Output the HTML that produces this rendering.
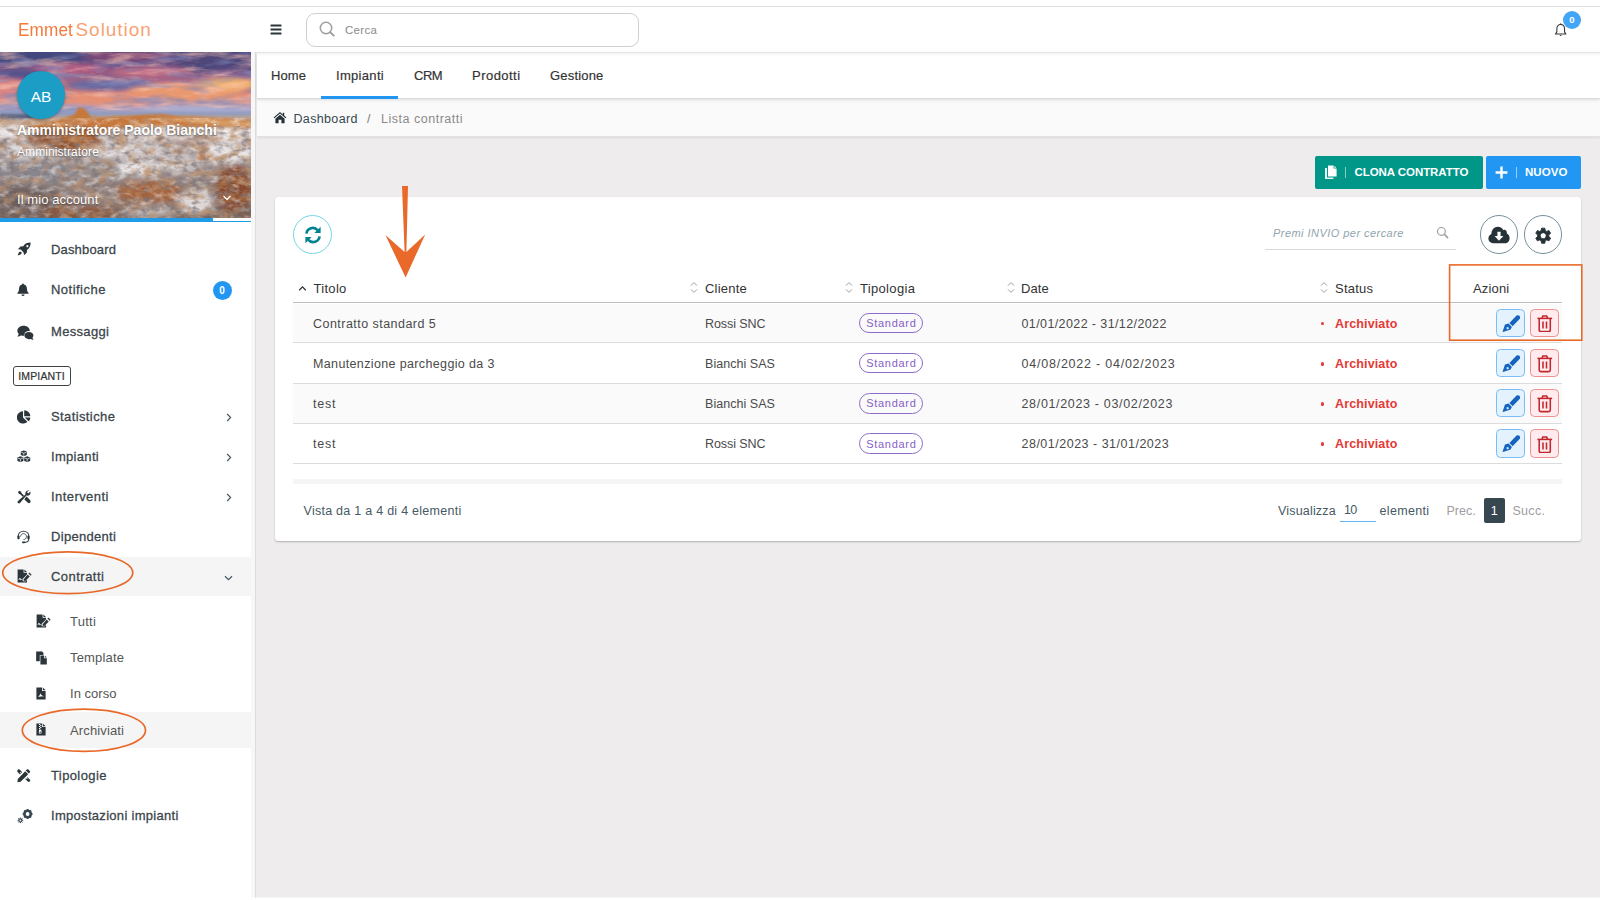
<!DOCTYPE html>
<html lang="it">
<head>
<meta charset="utf-8">
<title>Lista contratti</title>
<style>
*{box-sizing:border-box;margin:0;padding:0}
html,body{width:1600px;height:900px;overflow:hidden}
body{position:relative;background:#eeecec;font-family:"Liberation Sans",sans-serif;font-size:13px;color:#37474f}
.abs{position:absolute}
.t{position:absolute;white-space:nowrap;line-height:1}
/* top strip */
#topstrip{left:0;top:0;width:1600px;height:7px;background:#fff;border-bottom:1px solid #e2e2e2}
/* header */
#header{left:0;top:7px;width:1600px;height:45px;background:#fff}
#hshadow{left:256px;top:52px;width:1344px;height:1px;background:#e4e4e4;box-shadow:0 1px 3px rgba(0,0,0,.13)}
/* sidebar */
#sidebar{left:0;top:52px;width:256px;height:848px;background:#fff;border-right:1px solid #dcdcdc}
#sbtrack{left:251px;top:52px;width:4px;height:848px;background:#f7f7f7}
/* nav */
#nav{left:257px;top:53px;width:1343px;height:46px;background:#fff;border-bottom:1px solid #dcdcdc;box-shadow:0 1px 3px rgba(0,0,0,.12)}
#crumb{left:257px;top:99px;width:1343px;height:38px;background:#fafafa;border-bottom:1px solid #e2e2e2;box-shadow:0 1px 2px rgba(0,0,0,.07)}
/* card */
#card{left:275px;top:197px;width:1306px;height:344px;background:#fff;border-radius:3px;box-shadow:0 1px 2px rgba(0,0,0,.26)}
.mi{font-size:13px;color:#3a4449;-webkit-text-stroke:.27px #3a4449;letter-spacing:.35px}
.si{font-size:13px;color:#555;letter-spacing:.3px}
.nt{font-size:13px;color:#333;-webkit-text-stroke:.18px #333;letter-spacing:.3px}
.th{font-size:13px;color:#333;letter-spacing:.3px}
.td{font-size:12.5px;color:#4a4a4a;letter-spacing:.3px}
.ft{font-size:12.5px;color:#455a64;letter-spacing:.25px}
/*LS*/
#cerca{letter-spacing:0.303px !important}
#uname{letter-spacing:-0.005px !important}
#urole{letter-spacing:0.086px !important}
#uacc{letter-spacing:0.084px !important}
#m0{letter-spacing:0.161px !important}
#m1{letter-spacing:0.478px !important}
#m2{letter-spacing:0.323px !important}
#m3{letter-spacing:0.392px !important}
#m4{letter-spacing:0.310px !important}
#m5{letter-spacing:0.435px !important}
#m6{letter-spacing:0.305px !important}
#m7{letter-spacing:0.470px !important}
#m8{letter-spacing:0.390px !important}
#m9{letter-spacing:0.300px !important}
#s0{letter-spacing:0.272px !important}
#s1{letter-spacing:0.164px !important}
#s2{letter-spacing:0.021px !important}
#s3{letter-spacing:0.128px !important}
#n0{letter-spacing:0.104px !important}
#n1{letter-spacing:0.310px !important}
#n2{letter-spacing:-0.455px !important}
#n3{letter-spacing:0.470px !important}
#n4{letter-spacing:0.179px !important}
#bc1{letter-spacing:0.343px !important}
#bc3{letter-spacing:0.518px !important}
#clona{letter-spacing:-0.063px !important}
#nuovo{letter-spacing:0.057px !important}
#premi{letter-spacing:0.454px !important}
#h0{letter-spacing:0.297px !important}
#h1{letter-spacing:0.205px !important}
#h2{letter-spacing:0.327px !important}
#h3{letter-spacing:0.110px !important}
#h4{letter-spacing:0.208px !important}
#h5{letter-spacing:0.156px !important}
#r0a{letter-spacing:0.465px !important}
#r1a{letter-spacing:0.361px !important}
#r2a{letter-spacing:0.781px !important}
#r3a{letter-spacing:0.781px !important}
#r0b{letter-spacing:-0.078px !important}
#r1b{letter-spacing:0.042px !important}
#r2b{letter-spacing:0.042px !important}
#r3b{letter-spacing:-0.078px !important}
#r0c{letter-spacing:0.394px !important}
#r1c{letter-spacing:0.771px !important}
#r2c{letter-spacing:0.667px !important}
#r3c{letter-spacing:0.498px !important}
#r0d{letter-spacing:0.140px !important}
#r1d{letter-spacing:0.140px !important}
#r2d{letter-spacing:0.140px !important}
#r3d{letter-spacing:0.140px !important}
#f0{letter-spacing:0.264px !important}
#f1{letter-spacing:0.176px !important}
#f2{letter-spacing:-0.756px !important}
#f3{letter-spacing:0.343px !important}
#f4{letter-spacing:-0.009px !important}
#f6{letter-spacing:0.284px !important}
/*ENDLS*/
</style>
</head>
<body>
<div id="topstrip" class="abs"></div>
<div id="header" class="abs"></div>
<div id="sidebar" class="abs"></div>
<div id="sbtrack" class="abs"></div>
<div id="crumb" class="abs"></div>
<div id="nav" class="abs"></div>
<div id="hshadow" class="abs"></div>
<div id="card" class="abs"></div>

<!-- HEADER -->
<div class="t" id="logo" style="left:17.5px;top:20px;font-size:19px;color:#f4793b"><span style="display:inline-block;transform:scaleX(.9);transform-origin:0 50%;letter-spacing:.2px">Emmet</span><span style="display:inline-block;color:#f8a273;margin-left:-3.2px;letter-spacing:.95px;transform-origin:0 50%">Solution</span></div>
<svg class="abs" style="left:270px;top:24px" width="12" height="11" viewBox="0 0 12 11"><g fill="#2b353a"><rect x="0.5" y="0.6" width="11" height="2" rx=".5"/><rect x="0.5" y="4.5" width="11" height="2" rx=".5"/><rect x="0.5" y="8.4" width="11" height="2" rx=".5"/></g></svg>
<div class="abs" id="search" style="left:306px;top:13px;width:333px;height:34px;border:1px solid #cfcfcf;border-radius:9px;background:#fff"></div>
<svg class="abs" style="left:318px;top:20px" width="18" height="18" viewBox="0 0 18 18"><circle cx="8" cy="8" r="5.7" fill="none" stroke="#9e9e9e" stroke-width="1.5"/><path d="M12.2 12.2 L15.8 15.6" stroke="#9e9e9e" stroke-width="1.9" stroke-linecap="round"/></svg>
<div class="t" id="cerca" style="left:345px;top:25px;font-size:11.5px;color:#8a8a8a">Cerca</div>
<svg class="abs" style="left:1553.2px;top:22.8px" width="15.4" height="15.4" viewBox="0 0 16 16"><path d="M8 1.6 C5.3 1.6 4 3.6 4 6.2 V9.2 L2.6 11.4 H13.4 L12 9.2 V6.2 C12 3.6 10.7 1.6 8 1.6 Z" fill="none" stroke="#333" stroke-width="1.1" stroke-linejoin="round"/><path d="M6.8 12.6 Q8 14.4 9.2 12.6 Z" fill="#333"/><rect x="7.4" y="0.4" width="1.2" height="1.4" fill="#333"/></svg>
<div class="abs" style="left:1563px;top:10.6px;width:18px;height:18px;border-radius:9px;background:#42a5f5"></div>
<div class="t" id="bell0" style="left:1563px;top:15.4px;width:18px;text-align:center;font-size:9.5px;font-weight:700;color:#fff">0</div>

<!-- USER PANEL -->
<svg class="abs" id="photo" style="left:0;top:52px" width="251" height="166" viewBox="0 0 251 166" preserveAspectRatio="none">
<defs>
<linearGradient id="sky" x1="0" y1="0" x2="0" y2="1">
<stop offset="0" stop-color="#46457a"/><stop offset=".22" stop-color="#6b5086"/><stop offset=".46" stop-color="#a96684"/><stop offset=".7" stop-color="#de8c78"/><stop offset=".88" stop-color="#bea6bf"/><stop offset="1" stop-color="#8e9bc4"/>
</linearGradient>
<linearGradient id="gnd" x1="0" y1="0" x2="0" y2="1">
<stop offset="0" stop-color="#c2a48e"/><stop offset=".3" stop-color="#b3a5a3"/><stop offset=".65" stop-color="#938583"/><stop offset="1" stop-color="#735e56"/>
</linearGradient>
<filter id="b3" x="-30%" y="-30%" width="160%" height="160%"><feGaussianBlur stdDeviation="3"/></filter>
<filter id="b4" x="-30%" y="-30%" width="160%" height="160%"><feGaussianBlur stdDeviation="4 2.2"/></filter>
<filter id="b1" x="-30%" y="-30%" width="160%" height="160%"><feGaussianBlur stdDeviation="1"/></filter>
<filter id="tex" x="0" y="0" width="100%" height="100%">
<feTurbulence type="fractalNoise" baseFrequency="0.1 0.17" numOctaves="4" seed="7" result="n"/>
<feColorMatrix in="n" type="matrix" values="0 0 0 0 1  0 0 0 0 1  0 0 0 0 1  2.6 0 0 0 -1.15"/>
</filter>
<filter id="tex2" x="0" y="0" width="100%" height="100%">
<feTurbulence type="fractalNoise" baseFrequency="0.07 0.12" numOctaves="4" seed="23" result="n"/>
<feColorMatrix in="n" type="matrix" values="0 0 0 0 .5  0 0 0 0 .27  0 0 0 0 .14  0 3 0 0 -1.4"/>
</filter>
<filter id="tex3" x="0" y="0" width="100%" height="100%">
<feTurbulence type="fractalNoise" baseFrequency="0.12 0.2" numOctaves="3" seed="5" result="n"/>
<feColorMatrix in="n" type="matrix" values="0 0 0 0 .2  0 0 0 0 .17  0 0 0 0 .18  0 0 3 0 -1.45"/>
</filter>
<filter id="texsky" x="0" y="0" width="100%" height="100%">
<feTurbulence type="fractalNoise" baseFrequency="0.03 0.13" numOctaves="4" seed="11" result="n"/>
<feColorMatrix in="n" type="matrix" values="0 0 0 0 .96  0 0 0 0 .55  0 0 0 0 .45  3 0 0 0 -1.35"/>
</filter>
<filter id="texsky2" x="0" y="0" width="100%" height="100%">
<feTurbulence type="fractalNoise" baseFrequency="0.028 0.11" numOctaves="3" seed="31" result="n"/>
<feColorMatrix in="n" type="matrix" values="0 0 0 0 .22  0 0 0 0 .24  0 0 0 0 .48  0 3 0 0 -1.4"/>
</filter>
</defs>
<rect width="251" height="64" fill="url(#sky)"/>
<g filter="url(#b4)">
<ellipse cx="35" cy="5" rx="50" ry="8" fill="#43467d"/>
<ellipse cx="128" cy="4" rx="45" ry="6" fill="#7e4a78"/>
<ellipse cx="218" cy="12" rx="42" ry="10" fill="#4f477a"/>
<ellipse cx="70" cy="17" rx="38" ry="5" fill="#b85c80"/>
<ellipse cx="150" cy="20" rx="40" ry="5" fill="#c06a84"/>
<ellipse cx="6" cy="38" rx="26" ry="11" fill="#de8580"/>
<ellipse cx="112" cy="33" rx="46" ry="6" fill="#6a679f"/>
<ellipse cx="20" cy="22" rx="24" ry="5" fill="#55528c"/>
<ellipse cx="185" cy="40" rx="58" ry="9" fill="#e8996f"/>
<ellipse cx="228" cy="32" rx="30" ry="6" fill="#f2b36e"/>
<ellipse cx="232" cy="22" rx="24" ry="4" fill="#7a5c90"/>
<ellipse cx="105" cy="47" rx="62" ry="6" fill="#e58f74"/>
<ellipse cx="40" cy="57" rx="55" ry="4.5" fill="#9097c2"/>
<ellipse cx="200" cy="58" rx="62" ry="4" fill="#a7acd0"/>
</g>
<rect width="251" height="58" filter="url(#texsky)" opacity=".6"/>
<rect width="251" height="58" filter="url(#texsky2)" opacity=".7"/>
<rect y="62" width="251" height="104" fill="url(#gnd)"/>
<rect y="59.5" width="251" height="5" fill="#8f9cc0" opacity=".8" filter="url(#b1)"/>
<rect y="62" width="34" height="5" fill="#5d6888" filter="url(#b1)"/>
<g filter="url(#b1)">
<path d="M14 78 L40 72 L58 68 L74 63 L79 55 L85 57 L92 66 L112 65 L140 63 L162 62 L176 64 L200 65 L236 67 L251 69 L251 77 L205 75 L150 74 L112 77 L92 84 L58 82 Z" fill="#c6773a"/>
<path d="M150 66 L200 66 L251 70 L251 74 L200 72 Z" fill="#d89a5e"/>
<path d="M26 84 L44 74 L60 80 L78 72 L96 84 L108 96 L84 100 L56 96 L34 98 Z" fill="#8f5330"/>
<path d="M62 80 L75 71 L88 75 L95 87 L80 92 L64 88 Z" fill="#b2632e"/>
<path d="M197 108 L201 96 L207 91 L213 97 L217 108 Z" fill="#c66f2e"/>
</g>
<g filter="url(#b3)">
<ellipse cx="12" cy="80" rx="20" ry="6" fill="#efedf0"/>
<ellipse cx="232" cy="82" rx="24" ry="6" fill="#f1eeee"/>
<ellipse cx="160" cy="82" rx="40" ry="5" fill="#e6e0e0"/>
<ellipse cx="198" cy="89" rx="28" ry="3.5" fill="#b4958a"/>
<ellipse cx="30" cy="100" rx="26" ry="7" fill="#e4e1e4"/>
<ellipse cx="125" cy="98" rx="40" ry="8" fill="#d6d0d2"/>
<ellipse cx="228" cy="100" rx="26" ry="10" fill="#e2dedf"/>
<ellipse cx="36" cy="120" rx="42" ry="12" fill="#8a868e"/>
<ellipse cx="100" cy="118" rx="26" ry="10" fill="#9a8f8c"/>
<ellipse cx="138" cy="116" rx="22" ry="7" fill="#e9e6e8"/>
<ellipse cx="180" cy="112" rx="22" ry="8" fill="#c9c3c4"/>
<ellipse cx="26" cy="148" rx="36" ry="14" fill="#6f605d"/>
<ellipse cx="95" cy="146" rx="28" ry="9" fill="#97857f"/>
<ellipse cx="150" cy="140" rx="34" ry="11" fill="#a4623b"/>
<ellipse cx="234" cy="136" rx="18" ry="24" fill="#87492a"/>
<ellipse cx="196" cy="150" rx="18" ry="12" fill="#dcd6d6"/>
<ellipse cx="80" cy="160" rx="40" ry="7" fill="#8a583e"/>
<ellipse cx="150" cy="160" rx="28" ry="6" fill="#b9aeac"/>
</g>
<rect y="66" width="251" height="100" filter="url(#tex)" opacity=".52"/>
<rect y="63" width="251" height="103" filter="url(#tex2)" opacity=".8"/>
<rect y="74" width="251" height="92" filter="url(#tex3)" opacity=".7"/>
</svg>
<div class="abs" style="left:0;top:218px;width:251px;height:4px;background:#fff"></div>
<div class="abs" style="left:0;top:218px;width:213px;height:3px;background:#1e9be9"></div>
<div class="abs" style="left:0;top:221px;width:251px;height:1px;background:#1e9be9"></div>
<div class="abs" style="left:17px;top:71px;width:48px;height:48px;border-radius:24px;background:#1b9dc6;box-shadow:0 1px 3px rgba(0,0,0,.35)"></div>
<div class="t" id="ab" style="left:17px;top:88.5px;width:48px;text-align:center;font-size:15.5px;color:#fff">AB</div>
<div class="t" id="uname" style="left:17px;top:123px;font-size:14px;font-weight:700;color:#fff;text-shadow:0 1px 2px rgba(0,0,0,.45)">Amministratore Paolo Bianchi</div>
<div class="t" id="urole" style="left:17px;top:146px;font-size:12px;color:#fff;text-shadow:0 1px 2px rgba(0,0,0,.5)">Amministratore</div>
<div class="t" id="uacc" style="left:17px;top:193px;font-size:13px;color:#fff;text-shadow:0 1px 2px rgba(0,0,0,.5)">Il mio account</div>
<svg class="abs" style="left:222px;top:194px" width="10" height="8" viewBox="0 0 10 8"><path d="M1.5 2 L5 5.5 L8.5 2" fill="none" stroke="#fff" stroke-width="1.3"/></svg>

<!-- SIDEBAR MENU -->
<div class="abs" style="left:0;top:557px;width:251px;height:39px;background:#f5f5f5"></div>
<div class="abs" style="left:0;top:712px;width:251px;height:36px;background:#f5f5f5"></div>
<svg class="abs" style="left:17px;top:242px" width="17" height="15" viewBox="0 0 17 15" fill="#2b353a"><path d="M13.6 .6 C10.6 .5 8 1.6 6.2 4.2 L3.4 4.4 L1 7.2 L3.8 7.6 L6.6 10.4 L7 13.2 L9.8 10.8 L10 8 C12.6 6.2 13.7 3.6 13.6 .6 Z M10.4 3 A1.1 1.1 0 1 1 10.39 3 Z" fill-rule="evenodd"/><path d="M3.4 9.4 C2 9.8 1.2 11.2 .8 13.4 C3 13 4.4 12.2 4.8 10.8 Z"/></svg>
<div class="t mi" id="m0" style="left:51px;top:243.00px">Dashboard</div>
<svg class="abs" style="left:17px;top:283px" width="17" height="15" viewBox="0 0 17 15" fill="#2b353a"><path d="M6 .6 C6.6 .6 6.9 1 6.9 1.5 C9 2 10 3.8 10 6 C10 8.4 10.8 9.2 11.6 10 V10.8 H.4 V10 C1.2 9.2 2 8.4 2 6 C2 3.8 3 2 5.1 1.5 C5.1 1 5.4 .6 6 .6 Z"/><path d="M4.5 11.5 H7.5 A1.5 1.5 0 0 1 4.5 11.5 Z"/></svg>
<div class="t mi" id="m1" style="left:51px;top:282.60px">Notifiche</div>
<svg class="abs" style="left:17px;top:325px" width="17" height="15" viewBox="0 0 17 15" fill="#2b353a"><path d="M6.6 .8 C3 .8 .4 3 .4 5.8 C.4 7 .9 8.1 1.8 9 C1.5 10 .9 10.8 .4 11.4 C1.8 11.4 3.2 10.9 4 10.4 C4.8 10.7 5.7 10.8 6.6 10.8 C10.2 10.8 12.8 8.6 12.8 5.8 C12.8 3 10.2 .8 6.6 .8 Z"/><circle cx="11.8" cy="10.6" r="4.6" fill="#fff"/><path d="M11.9 7 C14.4 7 16.4 8.5 16.4 10.5 C16.4 11.4 16 12.2 15.4 12.8 C15.6 13.6 16.1 14.3 16.6 14.8 C15.4 14.8 14.3 14.4 13.7 14 C13.1 14.1 12.5 14.2 11.9 14.2 C9.4 14.2 7.4 12.6 7.4 10.6 C7.4 8.6 9.4 7 11.9 7 Z"/></svg>
<div class="t mi" id="m2" style="left:51px;top:324.60px">Messaggi</div>
<svg class="abs" style="left:17px;top:409.5px" width="17" height="15" viewBox="0 0 17 15" fill="#2b353a"><path d="M6 1.2 V7.4 L10.4 11.8 A6.2 6.2 0 1 1 6 1.2 Z"/><path d="M7.2 .2 A6.2 6.2 0 0 1 13.4 6.2 H7.2 Z"/><path d="M7.8 7.4 H13.4 A6.2 6.2 0 0 1 11.6 11.2 Z"/></svg>
<div class="t mi" id="m3" style="left:51px;top:409.75px">Statistiche</div>
<svg class="abs" style="left:17px;top:450px" width="17" height="15" viewBox="0 0 17 15" fill="#2b353a"><path d="M6.8 .4 L9.8 1.5 V5 L6.8 6.2 L3.8 5 V1.5 Z M3.4 6.2 L6.4 7.4 V10.9 L3.4 12.1 L.4 10.9 V7.4 Z M10.2 6.2 L13.2 7.4 V10.9 L10.2 12.1 L7.2 10.9 V7.4 Z"/><path d="M6.8 3.2 L9.4 2.2 M6.8 3.2 L4.2 2.2 M6.8 3.2 V5.8 M3.4 9 L6 8 M3.4 9 L.8 8 M3.4 9 V11.6 M10.2 9 L12.8 8 M10.2 9 L7.6 8 M10.2 9 V11.6" stroke="#fff" stroke-width=".7" fill="none"/></svg>
<div class="t mi" id="m4" style="left:51px;top:449.50px">Impianti</div>
<svg class="abs" style="left:17px;top:489.5px" width="17" height="15" viewBox="0 0 17 15" fill="#2b353a"><path d="M1 2 L2.2 .8 L4.2 1.8 L4.4 3 L7 5.6 L5.8 6.8 L3.2 4.2 L2 4 Z"/><path d="M12.6 .6 C11.2 .2 9.8 .6 9 1.6 C8.3 2.5 8.2 3.6 8.5 4.6 L1 11 C.4 11.6 .4 12.4 1 13 C1.6 13.6 2.4 13.6 3 13 L9.4 5.5 C10.4 5.8 11.5 5.7 12.4 5 C13.4 4.2 13.8 2.8 13.4 1.4 L11.6 3.2 L10.4 3 L10.2 1.8 Z"/><path d="M8.2 8 L9.6 6.6 L13 10 C13.8 10.8 13.8 11.8 13.2 12.6 C12.4 13.4 11.4 13.4 10.6 12.6 L7.4 9.4 Z"/></svg>
<div class="t mi" id="m5" style="left:51px;top:489.75px">Interventi</div>
<svg class="abs" style="left:17px;top:530px" width="17" height="15" viewBox="0 0 17 15" fill="#2b353a"><path d="M6.5 1.2 C3.4 1.2 1.2 3.4 1.2 6.4 V7.2 M11.8 7.2 V6.4 C11.8 3.4 9.6 1.2 6.5 1.2 M11.8 8.6 C11.8 11 10.4 12.4 8 12.4 H6.8" fill="none" stroke="#37474f" stroke-width="1.1"/><rect x=".4" y="5.6" width="2.2" height="3.6" rx=".8"/><rect x="10.4" y="5.6" width="2.2" height="3.6" rx=".8"/><rect x="5" y="11.6" width="3" height="1.6" rx=".8"/><path d="M3.6 6.6 C3.6 4.8 4.8 3.6 6.5 3.6 C8.2 3.6 9.4 4.8 9.4 6.6 C9.4 8.4 8.2 9.6 6.5 9.6" fill="none" stroke="#37474f" stroke-width=".9"/></svg>
<div class="t mi" id="m6" style="left:51px;top:529.75px">Dipendenti</div>
<svg class="abs" style="left:17px;top:569px" width="17" height="15" viewBox="0 0 17 15" fill="#2b353a"><path d="M.6 .4 H6.6 V3.8 H10 V5.6 L5.6 10 V12 H7.8 L10 9.8 V13.6 H.6 Z M7.4 .4 L10 3 H7.4 Z"/><path d="M13 3.8 L14.4 5.2 C14.7 5.5 14.7 5.9 14.4 6.2 L13.6 7 L11.2 4.6 L12 3.8 C12.3 3.5 12.7 3.5 13 3.8 Z M10.6 5.2 L13 7.6 L8.4 12.2 H6.4 V10.2 Z" stroke="#fff" stroke-width=".5"/><path d="M1.8 11 L3 9 L3.8 11 L4.8 10.4" stroke="#fff" stroke-width=".8" fill="none"/></svg>
<div class="t mi" id="m7" style="left:51px;top:569.75px">Contratti</div>
<svg class="abs" style="left:17px;top:768.5px" width="17" height="15" viewBox="0 0 17 15" fill="#2b353a"><path d="M2.6 .6 L5.2 3.2 L4.4 4 L3.4 3 L2.8 3.6 L3.8 4.6 L3 5.4 L.6 3 C0 2.4 0 1.6 .6 1 C1.2 .2 2 0 2.6 .6 Z"/><path d="M10.4 8.2 L12.8 10.6 C13.4 11.2 13.4 12 12.8 12.6 C12.2 13.2 11.4 13.2 10.8 12.6 L8.2 10 L9 9.2 L10 10.2 L10.6 9.6 L9.6 8.6 Z"/><path d="M11.4 .6 L12.8 2 C13.3 2.5 13.3 3.1 12.8 3.6 L11.8 4.6 L8.8 1.6 L9.8 .6 C10.3 .1 10.9 .1 11.4 .6 Z M8.2 2.2 L11.2 5.2 L3.6 12.8 L.4 13.2 L.8 10 Z"/></svg>
<div class="t mi" id="m8" style="left:51px;top:769.00px">Tipologie</div>
<svg class="abs" style="left:17px;top:809px" width="17" height="15" viewBox="0 0 17 15" fill="#2b353a"><circle cx="10.6" cy="5" r="3.2" fill="none" stroke="#37474f" stroke-width="2.6"/><g stroke="#37474f" stroke-width="1.6"><path d="M10.6 0 V1.6 M10.6 8.4 V10 M5.6 5 H7.2 M14 5 H15.6 M7.1 1.5 L8.2 2.6 M13 7.4 L14.1 8.5 M14.1 1.5 L13 2.6 M8.2 7.4 L7.1 8.5"/></g><circle cx="3.4" cy="11.4" r="1.5" fill="none" stroke="#37474f" stroke-width="1.3"/><g stroke="#37474f" stroke-width="1"><path d="M3.4 8.6 V9.6 M3.4 13.2 V14.2 M.6 11.4 H1.6 M5.2 11.4 H6.2 M1.4 9.4 L2.1 10.1 M4.7 12.7 L5.4 13.4 M5.4 9.4 L4.7 10.1 M2.1 12.7 L1.4 13.4"/></g></svg>
<div class="t mi" id="m9" style="left:51px;top:809.00px">Impostazioni impianti</div>
<svg class="abs" style="left:36px;top:614px" width="17" height="15" viewBox="0 0 17 15" fill="#2b353a"><path d="M.6 .4 H6.6 V3.8 H10 V5.6 L5.6 10 V12 H7.8 L10 9.8 V13.6 H.6 Z M7.4 .4 L10 3 H7.4 Z"/><path d="M13 3.8 L14.4 5.2 C14.7 5.5 14.7 5.9 14.4 6.2 L13.6 7 L11.2 4.6 L12 3.8 C12.3 3.5 12.7 3.5 13 3.8 Z M10.6 5.2 L13 7.6 L8.4 12.2 H6.4 V10.2 Z" stroke="#fff" stroke-width=".5"/><path d="M1.8 11 L3 9 L3.8 11 L4.8 10.4" stroke="#fff" stroke-width=".8" fill="none"/></svg>
<div class="t si" id="s0" style="left:70px;top:614.50px">Tutti</div>
<svg class="abs" style="left:36px;top:651px" width="17" height="15" viewBox="0 0 17 15" fill="#2b353a"><path d="M.4 .4 H4.6 V3.4 H7.4 V1.8 L6 .4 H4.6 M.4 .4 V10 H3.4 V4 H7.4 M.4 .4" /><path d="M.4 .4 H5 L7.4 2.8 V3.6 H3.6 V10.2 H.4 Z"/><path d="M4.4 4.4 H8 V7.2 H10.8 V13.4 H4.4 Z M8.8 4.4 L10.8 6.4 H8.8 Z"/></svg>
<div class="t si" id="s1" style="left:70px;top:651.00px">Template</div>
<svg class="abs" style="left:36px;top:687px" width="17" height="15" viewBox="0 0 17 15" fill="#2b353a"><path d="M.4 .4 H6 V4 H9.6 V12.6 H.4 Z M6.8 .4 L9.6 3.2 H6.8 Z"/><path d="M1.6 10 C3 9.4 4 8 4.4 6 C4.6 7.6 5.8 9 8.2 9.2 C6 9.2 3.6 9.6 1.6 10 Z" fill="#fff"/></svg>
<div class="t si" id="s2" style="left:70px;top:687.25px">In corso</div>
<svg class="abs" style="left:36px;top:723px" width="17" height="15" viewBox="0 0 17 15" fill="#2b353a"><path d="M.4 .4 H6 V4 H9.6 V12.6 H.4 Z M6.8 .4 L9.6 3.2 H6.8 Z"/><path d="M3 1 H4.2 V2 H3 Z M4.2 2 H5.4 V3 H4.2 Z M3 3 H4.2 V4 H3 Z M4.2 4 H5.4 V5 H4.2 Z M3 5 H4.2 V6 H3 Z M3.2 6.6 H5.2 L5.6 9.4 C5.6 10.2 5 10.6 4.2 10.6 C3.4 10.6 2.8 10.2 2.8 9.4 Z" fill="#fff"/><circle cx="4.2" cy="9.2" r=".7"/></svg>
<div class="t si" id="s3" style="left:70px;top:723.50px">Archiviati</div>
<svg class="abs" style="left:225.5px;top:413px" width="6" height="9" viewBox="0 0 6 9"><path d="M1.2 1 L4.6 4.5 L1.2 8" fill="none" stroke="#455a64" stroke-width="1.2"/></svg>
<svg class="abs" style="left:225.5px;top:453px" width="6" height="9" viewBox="0 0 6 9"><path d="M1.2 1 L4.6 4.5 L1.2 8" fill="none" stroke="#455a64" stroke-width="1.2"/></svg>
<svg class="abs" style="left:225.5px;top:493px" width="6" height="9" viewBox="0 0 6 9"><path d="M1.2 1 L4.6 4.5 L1.2 8" fill="none" stroke="#455a64" stroke-width="1.2"/></svg>
<svg class="abs" style="left:223.5px;top:574.5px" width="9" height="6" viewBox="0 0 9 6"><path d="M1 1.2 L4.5 4.6 L8 1.2" fill="none" stroke="#455a64" stroke-width="1.2"/></svg>
<div class="abs" style="left:212.5px;top:280.5px;width:19px;height:19px;border-radius:10px;background:#2196f3"></div><div class="t" id="nb0" style="left:212.5px;top:286px;width:19px;text-align:center;font-size:10px;font-weight:700;color:#fff">0</div>
<div class="abs" style="left:12.5px;top:365.5px;width:58px;height:20px;border:1px solid #424242;border-radius:3px"></div><div class="t" id="impb" style="left:12.5px;top:370.6px;width:58px;text-align:center;font-size:10.5px;letter-spacing:.15px;text-indent:.15px;color:#333;-webkit-text-stroke:.2px #333">IMPIANTI</div>
<svg class="abs" style="left:0;top:545px" width="160" height="215" viewBox="0 545 160 215"><ellipse cx="67.75" cy="572.75" rx="65" ry="20.8" fill="none" stroke="#e8692a" stroke-width="1.7"/><ellipse cx="83.9" cy="730.25" rx="61.6" ry="21.2" fill="none" stroke="#e8692a" stroke-width="1.7"/></svg>

<!-- NAV -->
<div class="t nt" id="n0" style="left:271px;top:69px">Home</div>
<div class="t nt" id="n1" style="left:336px;top:69px">Impianti</div>
<div class="t nt" id="n2" style="left:414px;top:69px">CRM</div>
<div class="t nt" id="n3" style="left:472px;top:69px">Prodotti</div>
<div class="t nt" id="n4" style="left:550px;top:69px">Gestione</div>
<div class="abs" style="left:321px;top:96px;width:77px;height:2.5px;background:#2196f3"></div>
<!-- BREADCRUMB -->
<svg class="abs" style="left:273px;top:111px" width="14" height="13" viewBox="0 0 14 13" fill="#263238"><path d="M7 1 L.6 6.4 L1.4 7.3 L7 2.6 L12.6 7.3 L13.4 6.4 L11.2 4.5 V1.8 H9.8 V3.4 Z"/><path d="M7 3.8 L2.4 7.7 V12.2 H5.6 V8.8 H8.4 V12.2 H11.6 V7.7 Z"/></svg>
<div class="t" id="bc1" style="left:293.5px;top:113px;font-size:12.5px;color:#37474f;letter-spacing:.3px">Dashboard</div>
<div class="t" id="bc2" style="left:367px;top:113px;font-size:12.5px;color:#777">/</div>
<div class="t" id="bc3" style="left:381px;top:113px;font-size:12.5px;color:#8a8a8a;letter-spacing:.3px">Lista contratti</div>
<!-- BUTTONS -->
<div class="abs" style="left:1315px;top:156px;width:168px;height:33px;background:#009688;border-radius:2px"></div>
<svg class="abs" style="left:1324px;top:165px" width="14" height="15" viewBox="0 0 14 15"><path d="M1 3 H3 V12.4 H9.4 V14 H1 Z" fill="#e8f5f3"/><path d="M4 .6 H9.6 V3.6 H12.6 V11.6 H4 Z M10.4 .8 L12.4 2.8 H10.4 Z" fill="#fff"/></svg>
<div class="abs" style="left:1345px;top:167px;width:1px;height:11px;background:rgba(255,255,255,.55)"></div>
<div class="t" id="clona" style="left:1354.5px;top:166.8px;font-size:11.5px;font-weight:700;color:#fff">CLONA CONTRATTO</div>
<div class="abs" style="left:1485.5px;top:156px;width:95.5px;height:33px;background:#2196f3;border-radius:2px"></div>
<svg class="abs" style="left:1495px;top:166px" width="13" height="13" viewBox="0 0 13 13"><path d="M5.3 .6 H7.7 V5.3 H12.4 V7.7 H7.7 V12.4 H5.3 V7.7 H.6 V5.3 H5.3 Z" fill="#fff"/></svg>
<div class="abs" style="left:1516px;top:167px;width:1px;height:11px;background:rgba(255,255,255,.55)"></div>
<div class="t" id="nuovo" style="left:1525px;top:166.8px;font-size:11.5px;font-weight:700;color:#fff">NUOVO</div>

<!-- CARD CONTENT -->
<div class="abs" style="left:293px;top:215px;width:39.2px;height:39.2px;border-radius:50%;border:1.4px solid #74d5e4;background:#fff"></div>
<svg class="abs" style="left:303px;top:225px" width="20" height="20" viewBox="0 0 20 20"><g fill="none" stroke="#00838f" stroke-width="2.6"><path d="M3.4 8.6 A6.4 6.4 0 0 1 14.6 5.2"/><path d="M16.6 11.4 A6.4 6.4 0 0 1 5.4 14.8"/></g><path d="M17.6 1.8 V8 H11.4 Z" fill="#00838f"/><path d="M2.4 18.2 V12 H8.6 Z" fill="#00838f"/></svg>
<svg class="abs" style="left:380px;top:180px" width="52" height="102" viewBox="380 180 52 102"><path d="M402 186 H408 L406.4 252 L425.2 234.6 L405.6 277.4 L385.4 235 L404.6 252 Z" fill="#e8692a"/></svg>
<div class="t" id="premi" style="left:1273px;top:228.2px;font-size:11px;font-style:italic;color:#90a4ae;letter-spacing:.2px">Premi INVIO per cercare</div>
<div class="abs" style="left:1265px;top:249px;width:191px;height:1px;background:#d9d9d9"></div>
<svg class="abs" style="left:1436px;top:226px" width="13" height="13" viewBox="0 0 13 13"><circle cx="5.4" cy="5.4" r="3.9" fill="none" stroke="#9e9e9e" stroke-width="1.2"/><path d="M8.4 8.4 L11.6 11.6" stroke="#9e9e9e" stroke-width="1.5" stroke-linecap="round"/></svg>
<div class="abs" style="left:1479.5px;top:215.3px;width:38.5px;height:38.5px;border-radius:50%;border:1px solid #78909c;background:#fff"></div>
<div class="abs" style="left:1523.5px;top:215.3px;width:38.5px;height:38.5px;border-radius:50%;border:1px solid #78909c;background:#fff"></div>
<svg class="abs" style="left:1488px;top:226.4px" width="22" height="17.8" viewBox="0 0 22 17" preserveAspectRatio="none"><path d="M5.2 16.4 C2.4 16.4 .4 14.4 .4 11.8 C.4 9.8 1.6 8.2 3.4 7.6 C3.4 3.6 6.2 .6 9.8 .6 C12.4 .6 14.4 2 15.4 4 C16 3.6 16.6 3.6 17.2 3.8 C18.6 4.4 19.2 5.8 18.8 7.2 C20.6 7.8 21.6 9.6 21.6 11.6 C21.6 14.4 19.6 16.4 17 16.4 Z" fill="#263238"/><path d="M9.4 5.6 H12.6 V9.6 H15.4 L11 14 L6.6 9.6 H9.4 Z" fill="#fff"/></svg>
<svg class="abs" style="left:1533.6px;top:225.9px" width="18.4" height="19.4" viewBox="0 -1.6 16.8 18"><path d="M6.9 .4 H9.9 L10.3 2.6 L11.7 3.4 L13.8 2.6 L15.3 5.2 L13.6 6.6 V8.2 L15.3 9.6 L13.8 12.2 L11.7 11.4 L10.3 12.2 L9.9 14.4 H6.9 L6.5 12.2 L5.1 11.4 L3 12.2 L1.5 9.6 L3.2 8.2 V6.6 L1.5 5.2 L3 2.6 L5.1 3.4 L6.5 2.6 Z M8.4 4.6 A2.8 2.8 0 1 0 8.41 4.6 Z" fill-rule="evenodd" fill="#263238" stroke="#263238" stroke-width=".8" stroke-linejoin="round"/></svg>
<svg class="abs" style="left:298px;top:285px" width="9" height="7" viewBox="0 0 9 7"><path d="M1.2 5.2 L4.5 1.9 L7.8 5.2" fill="none" stroke="#333" stroke-width="1.3"/></svg>
<svg class="abs" style="left:690.3px;top:281.2px" width="8" height="13" viewBox="0 0 8 13"><path d="M1 4.6 L4 1.6 L7 4.6 M1 8.4 L4 11.4 L7 8.4" fill="none" stroke="#9e9e9e" stroke-width="1"/></svg>
<svg class="abs" style="left:845.3px;top:281.2px" width="8" height="13" viewBox="0 0 8 13"><path d="M1 4.6 L4 1.6 L7 4.6 M1 8.4 L4 11.4 L7 8.4" fill="none" stroke="#9e9e9e" stroke-width="1"/></svg>
<svg class="abs" style="left:1007.3px;top:281.2px" width="8" height="13" viewBox="0 0 8 13"><path d="M1 4.6 L4 1.6 L7 4.6 M1 8.4 L4 11.4 L7 8.4" fill="none" stroke="#9e9e9e" stroke-width="1"/></svg>
<svg class="abs" style="left:1319.8px;top:281.2px" width="8" height="13" viewBox="0 0 8 13"><path d="M1 4.6 L4 1.6 L7 4.6 M1 8.4 L4 11.4 L7 8.4" fill="none" stroke="#9e9e9e" stroke-width="1"/></svg>
<div class="t th" id="h0" style="left:313.5px;top:282px">Titolo</div>
<div class="t th" id="h1" style="left:705px;top:282px">Cliente</div>
<div class="t th" id="h2" style="left:860px;top:282px">Tipologia</div>
<div class="t th" id="h3" style="left:1021px;top:282px">Date</div>
<div class="t th" id="h4" style="left:1335px;top:282px">Status</div>
<div class="t th" id="h5" style="left:1473px;top:282px">Azioni</div>
<div class="abs" style="left:293px;top:302px;width:1269px;height:1px;background:#bdbdbd"></div>
<div class="abs" style="left:293px;top:303.5px;width:1269px;height:39.0px;background:#fafafa"></div>
<div class="abs" style="left:293px;top:342.0px;width:1269px;height:1px;background:#dcdcdc"></div>
<div class="t td" id="r0a" style="left:313px;top:318.45px">Contratto standard 5</div>
<div class="t td" id="r0b" style="left:705px;top:318.45px">Rossi SNC</div>
<div class="abs" style="left:859px;top:312.55px;width:64px;height:20.5px;border:1px solid #8e6bc9;border-radius:10.5px"></div>
<div class="t" id="r0s" style="left:859px;top:317.95px;width:64px;text-align:center;font-size:11px;color:#875fc7;letter-spacing:.72px;text-indent:.7px">Standard</div>
<div class="t td" id="r0c" style="left:1021.5px;top:318.45px">01/01/2022 - 31/12/2022</div>
<div class="abs" style="left:1320.5px;top:321.55px;width:3.8px;height:3.8px;border-radius:2px;background:#e53935"></div>
<div class="t" id="r0d" style="left:1335px;top:318.45px;font-size:12.5px;font-weight:700;color:#e53935">Archiviato</div>
<div class="abs" style="left:1496.2px;top:308.55px;width:28.6px;height:28.4px;border:1px solid #7bbcf7;border-radius:4.5px;background:#e3f2fd"></div>
<div class="abs" style="left:1530.2px;top:308.55px;width:28.6px;height:28.4px;border:1px solid #ef9090;border-radius:4.5px;background:#ffebee"></div>
<svg class="abs" style="left:1501.5px;top:314.65px" width="18.5" height="17.5" viewBox="0 0 18.5 17.5"><path d="M14.6 .6 C15.6 -.1 16.8 .2 17.6 1 C18.4 1.8 18.5 3 17.8 3.8 L10.6 11.2 L7.4 8 Z" fill="#1565c0"/><path d="M6.6 8.6 L9.9 11.9 L8.6 14.6 L1 17 L.6 16.6 L3 9.6 Z M5.6 12 A1.1 1.1 0 1 0 5.61 12 Z" fill-rule="evenodd" fill="#1565c0"/></svg>
<svg class="abs" style="left:1537.2px;top:314.95px" width="15.5" height="17.5" viewBox="0 0 15.5 17.5"><g fill="none" stroke="#c1272d" stroke-width="1.55"><path d="M.4 3.4 H15.1"/><path d="M5 3.2 L5.8 1 H9.7 L10.5 3.2"/><path d="M2.2 3.6 V15 C2.2 16 2.8 16.6 3.8 16.6 H11.7 C12.7 16.6 13.3 16 13.3 15 V3.6"/><path d="M6 6.4 V13.6 M9.5 6.4 V13.6"/></g></svg>
<div class="abs" style="left:293px;top:382.5px;width:1269px;height:1px;background:#dcdcdc"></div>
<div class="t td" id="r1a" style="left:313px;top:358px">Manutenzione parcheggio da 3</div>
<div class="t td" id="r1b" style="left:705px;top:358px">Bianchi SAS</div>
<div class="abs" style="left:859px;top:352.8px;width:64px;height:20.5px;border:1px solid #8e6bc9;border-radius:10.5px"></div>
<div class="t" id="r1s" style="left:859px;top:358.2px;width:64px;text-align:center;font-size:11px;color:#875fc7;letter-spacing:.72px;text-indent:.7px">Standard</div>
<div class="t td" id="r1c" style="left:1021.5px;top:358px">04/08/2022 - 04/02/2023</div>
<div class="abs" style="left:1320.5px;top:361.8px;width:3.8px;height:3.8px;border-radius:2px;background:#e53935"></div>
<div class="t" id="r1d" style="left:1335px;top:358px;font-size:12.5px;font-weight:700;color:#e53935">Archiviato</div>
<div class="abs" style="left:1496.2px;top:348.8px;width:28.6px;height:28.4px;border:1px solid #7bbcf7;border-radius:4.5px;background:#e3f2fd"></div>
<div class="abs" style="left:1530.2px;top:348.8px;width:28.6px;height:28.4px;border:1px solid #ef9090;border-radius:4.5px;background:#ffebee"></div>
<svg class="abs" style="left:1501.5px;top:354.9px" width="18.5" height="17.5" viewBox="0 0 18.5 17.5"><path d="M14.6 .6 C15.6 -.1 16.8 .2 17.6 1 C18.4 1.8 18.5 3 17.8 3.8 L10.6 11.2 L7.4 8 Z" fill="#1565c0"/><path d="M6.6 8.6 L9.9 11.9 L8.6 14.6 L1 17 L.6 16.6 L3 9.6 Z M5.6 12 A1.1 1.1 0 1 0 5.61 12 Z" fill-rule="evenodd" fill="#1565c0"/></svg>
<svg class="abs" style="left:1537.2px;top:355.2px" width="15.5" height="17.5" viewBox="0 0 15.5 17.5"><g fill="none" stroke="#c1272d" stroke-width="1.55"><path d="M.4 3.4 H15.1"/><path d="M5 3.2 L5.8 1 H9.7 L10.5 3.2"/><path d="M2.2 3.6 V15 C2.2 16 2.8 16.6 3.8 16.6 H11.7 C12.7 16.6 13.3 16 13.3 15 V3.6"/><path d="M6 6.4 V13.6 M9.5 6.4 V13.6"/></g></svg>
<div class="abs" style="left:293px;top:384.0px;width:1269px;height:39.0px;background:#fafafa"></div>
<div class="abs" style="left:293px;top:422.5px;width:1269px;height:1px;background:#dcdcdc"></div>
<div class="t td" id="r2a" style="left:313px;top:397.95px">test</div>
<div class="t td" id="r2b" style="left:705px;top:397.95px">Bianchi SAS</div>
<div class="abs" style="left:859px;top:393.05px;width:64px;height:20.5px;border:1px solid #8e6bc9;border-radius:10.5px"></div>
<div class="t" id="r2s" style="left:859px;top:398.45px;width:64px;text-align:center;font-size:11px;color:#875fc7;letter-spacing:.72px;text-indent:.7px">Standard</div>
<div class="t td" id="r2c" style="left:1021.5px;top:397.95px">28/01/2023 - 03/02/2023</div>
<div class="abs" style="left:1320.5px;top:402.05px;width:3.8px;height:3.8px;border-radius:2px;background:#e53935"></div>
<div class="t" id="r2d" style="left:1335px;top:397.95px;font-size:12.5px;font-weight:700;color:#e53935">Archiviato</div>
<div class="abs" style="left:1496.2px;top:389.05px;width:28.6px;height:28.4px;border:1px solid #7bbcf7;border-radius:4.5px;background:#e3f2fd"></div>
<div class="abs" style="left:1530.2px;top:389.05px;width:28.6px;height:28.4px;border:1px solid #ef9090;border-radius:4.5px;background:#ffebee"></div>
<svg class="abs" style="left:1501.5px;top:395.15px" width="18.5" height="17.5" viewBox="0 0 18.5 17.5"><path d="M14.6 .6 C15.6 -.1 16.8 .2 17.6 1 C18.4 1.8 18.5 3 17.8 3.8 L10.6 11.2 L7.4 8 Z" fill="#1565c0"/><path d="M6.6 8.6 L9.9 11.9 L8.6 14.6 L1 17 L.6 16.6 L3 9.6 Z M5.6 12 A1.1 1.1 0 1 0 5.61 12 Z" fill-rule="evenodd" fill="#1565c0"/></svg>
<svg class="abs" style="left:1537.2px;top:395.45px" width="15.5" height="17.5" viewBox="0 0 15.5 17.5"><g fill="none" stroke="#c1272d" stroke-width="1.55"><path d="M.4 3.4 H15.1"/><path d="M5 3.2 L5.8 1 H9.7 L10.5 3.2"/><path d="M2.2 3.6 V15 C2.2 16 2.8 16.6 3.8 16.6 H11.7 C12.7 16.6 13.3 16 13.3 15 V3.6"/><path d="M6 6.4 V13.6 M9.5 6.4 V13.6"/></g></svg>
<div class="abs" style="left:293px;top:463.0px;width:1269px;height:1px;background:#dcdcdc"></div>
<div class="t td" id="r3a" style="left:313px;top:438px">test</div>
<div class="t td" id="r3b" style="left:705px;top:438px">Rossi SNC</div>
<div class="abs" style="left:859px;top:433.3px;width:64px;height:20.5px;border:1px solid #8e6bc9;border-radius:10.5px"></div>
<div class="t" id="r3s" style="left:859px;top:438.7px;width:64px;text-align:center;font-size:11px;color:#875fc7;letter-spacing:.72px;text-indent:.7px">Standard</div>
<div class="t td" id="r3c" style="left:1021.5px;top:438px">28/01/2023 - 31/01/2023</div>
<div class="abs" style="left:1320.5px;top:442.3px;width:3.8px;height:3.8px;border-radius:2px;background:#e53935"></div>
<div class="t" id="r3d" style="left:1335px;top:438px;font-size:12.5px;font-weight:700;color:#e53935">Archiviato</div>
<div class="abs" style="left:1496.2px;top:429.3px;width:28.6px;height:28.4px;border:1px solid #7bbcf7;border-radius:4.5px;background:#e3f2fd"></div>
<div class="abs" style="left:1530.2px;top:429.3px;width:28.6px;height:28.4px;border:1px solid #ef9090;border-radius:4.5px;background:#ffebee"></div>
<svg class="abs" style="left:1501.5px;top:435.4px" width="18.5" height="17.5" viewBox="0 0 18.5 17.5"><path d="M14.6 .6 C15.6 -.1 16.8 .2 17.6 1 C18.4 1.8 18.5 3 17.8 3.8 L10.6 11.2 L7.4 8 Z" fill="#1565c0"/><path d="M6.6 8.6 L9.9 11.9 L8.6 14.6 L1 17 L.6 16.6 L3 9.6 Z M5.6 12 A1.1 1.1 0 1 0 5.61 12 Z" fill-rule="evenodd" fill="#1565c0"/></svg>
<svg class="abs" style="left:1537.2px;top:435.7px" width="15.5" height="17.5" viewBox="0 0 15.5 17.5"><g fill="none" stroke="#c1272d" stroke-width="1.55"><path d="M.4 3.4 H15.1"/><path d="M5 3.2 L5.8 1 H9.7 L10.5 3.2"/><path d="M2.2 3.6 V15 C2.2 16 2.8 16.6 3.8 16.6 H11.7 C12.7 16.6 13.3 16 13.3 15 V3.6"/><path d="M6 6.4 V13.6 M9.5 6.4 V13.6"/></g></svg>
<div class="abs" style="left:293px;top:479px;width:1269px;height:4.5px;background:#f5f5f5"></div>
<div class="t ft" id="f0" style="left:303.5px;top:505.2px">Vista da 1 a 4 di 4 elementi</div>
<div class="t ft" id="f1" style="left:1278px;top:505.2px">Visualizza</div>
<div class="t ft" id="f2" style="left:1344px;top:504.2px">10</div>
<div class="abs" style="left:1340px;top:520.6px;width:36px;height:1.8px;background:#64b5f6"></div>
<div class="t ft" id="f3" style="left:1379.5px;top:505.2px">elementi</div>
<div class="t ft" id="f4" style="left:1446.5px;top:505.2px;color:#9e9e9e">Prec.</div>
<div class="abs" style="left:1484px;top:498px;width:20.5px;height:24.5px;background:#37474f;border-radius:2px"></div>
<div class="t ft" id="f5" style="left:1484px;top:505.2px;width:20.5px;text-align:center;color:#fff">1</div>
<div class="t ft" id="f6" style="left:1512.5px;top:505.2px;color:#9e9e9e">Succ.</div>
<svg class="abs" style="left:1445px;top:260px" width="142" height="85" viewBox="1445 260 142 85"><rect x="1449.6" y="264.9" width="132.2" height="75.3" fill="none" stroke="#e8692a" stroke-width="1.6"/></svg>
<div class="abs" style="left:0;top:898px;width:1600px;height:2px;background:#fff"></div>
<div class="abs" style="left:0;top:897.4px;width:1600px;height:1px;background:#fff;opacity:.5"></div>
<!--SECTIONS-->
</body>
</html>
